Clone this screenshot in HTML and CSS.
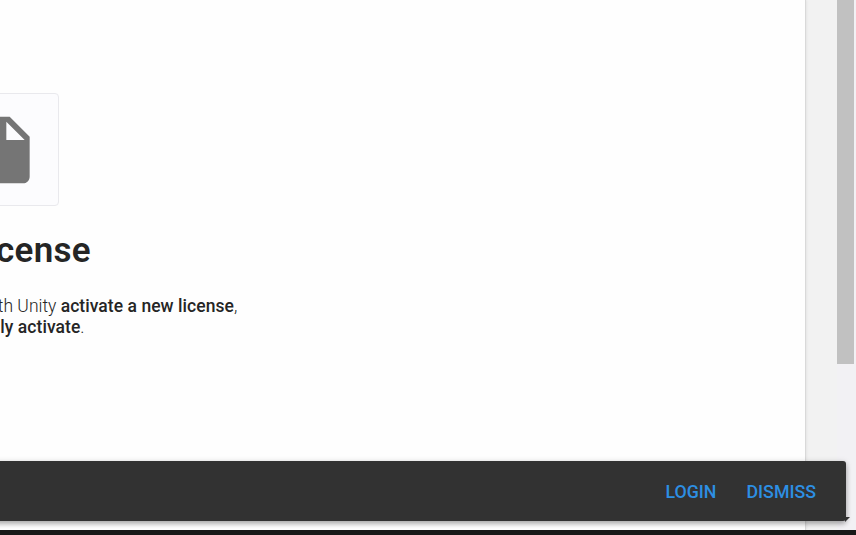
FILE: index.html
```html
<!DOCTYPE html>
<html lang="en">
<head>
<meta charset="utf-8">
<title>License</title>
<link rel="stylesheet" href="styles.css">
</head>
<body>
<div class="window">
  <main class="page">
    <div class="tile">
      <svg class="file-icon" viewBox="0 0 24 24"><path d="M6 2c-1.1 0-1.99.9-1.99 2L4 20c0 1.1.89 2 1.99 2H18c1.1 0 2-.9 2-2V8l-6-6H6zm7 7V3.5L18.5 9H13z"/></svg>
    </div>
    <h1 class="title"><span>cense</span></h1>
    <p class="line first"><span>th Unity <b>activate a new license</b>,</span></p>
    <p class="line second"><span><b>ly activate</b>.</span></p>
  </main>
  <div class="gutter"></div>
  <div class="scrollbar"><div class="thumb"></div></div>
</div>
<div class="snackbar">
  <button class="action">LOGIN</button>
  <button class="action">DISMISS</button>
  <svg class="corner" viewBox="0 0 5 5"><path d="M0 0h5L0 5z"/></svg>
</div>
<footer class="taskbar"></footer>
</body>
</html>
```
FILE: styles.css
```css
* { box-sizing: border-box; }
body {
  margin: 0;
  height: 535px;
  overflow: hidden;
  position: relative;
  display: flex;
  flex-direction: column;
  font-family: Roboto, sans-serif;
  color: #252525;
  background: #f2f2f2;
}
.window { display: flex; height: 530px; }
.page {
  width: 806px;
  padding-top: 93px;
  background: #fefefe;
  border-right: 1px solid #d9d9d9;
  box-shadow: 0 0 3px rgba(0, 0, 0, .1);
  overflow: hidden;
}
.tile {
  width: 113px;
  height: 113px;
  margin-left: -54px;
  display: flex;
  align-items: center;
  justify-content: center;
  background: #fcfcfe;
  border: 1px solid #e9e9ed;
  border-radius: 4px;
}
.file-icon { width: 80px; height: 80px; fill: #757575; }
.title, .line { margin: 0; display: flex; justify-content: flex-end; white-space: nowrap; }
.title {
  width: 91px;
  margin-top: 25px;
  font-size: 35px;
  line-height: 40px;
  font-weight: 600;
  letter-spacing: .3px;
}
.line { font-size: 17.5px; line-height: 21px; font-weight: 300; }
.line b { font-weight: 500; letter-spacing: .05px; }
.first { width: 237.3px; margin-top: 25px; }
.second { width: 84.5px; }
.gutter { width: 31px; }
.scrollbar { width: 19px; background: #f2f1f4; }
.thumb { width: 17px; height: 364px; background: #c1c1c1; }
.snackbar {
  position: absolute;
  left: -8px;
  top: 461px;
  width: 854px;
  height: 60px;
  padding-right: 30px;
  display: flex;
  align-items: center;
  justify-content: flex-end;
  gap: 30px;
  background: #323232;
  border-radius: 0 3px 3px 0;
  box-shadow: 0 3px 5px rgba(0, 0, 0, .25), 0 1px 6px rgba(0, 0, 0, .15);
}
.action {
  padding: 2px 0 0;
  border: 0;
  background: none;
  color: #2d8fe3;
  font: 500 17.8px/20px Roboto, sans-serif;
}
.corner { position: absolute; right: -4px; bottom: -1px; width: 5px; height: 5px; fill: #323232; }
.taskbar { height: 5px; background: #181818; position: relative; }
```
